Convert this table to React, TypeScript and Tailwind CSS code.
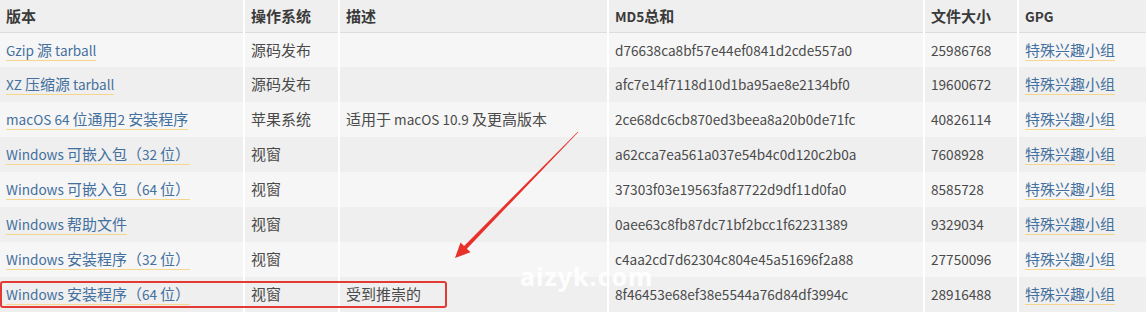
const rows = [
  { name: "Gzip 源 tarball", os: "源码发布", desc: "", md5: "d76638ca8bf57e44ef0841d2cde557a0", size: "25986768" },
  { name: "XZ 压缩源 tarball", os: "源码发布", desc: "", md5: "afc7e14f7118d10d1ba95ae8e2134bf0", size: "19600672" },
  { name: "macOS 64 位通用2 安装程序", os: "苹果系统", desc: "适用于 macOS 10.9 及更高版本", md5: "2ce68dc6cb870ed3beea8a20b0de71fc", size: "40826114" },
  { name: "Windows 可嵌入包（32 位）", os: "视窗", desc: "", md5: "a62cca7ea561a037e54b4c0d120c2b0a", size: "7608928" },
  { name: "Windows 可嵌入包（64 位）", os: "视窗", desc: "", md5: "37303f03e19563fa87722d9df11d0fa0", size: "8585728" },
  { name: "Windows 帮助文件", os: "视窗", desc: "", md5: "0aee63c8fb87dc71bf2bcc1f62231389", size: "9329034" },
  { name: "Windows 安装程序（32 位）", os: "视窗", desc: "", md5: "c4aa2cd7d62304c804e45a51696f2a88", size: "27750096" },
  { name: "Windows 安装程序（64 位）", os: "视窗", desc: "受到推崇的", md5: "8f46453e68ef38e5544a76d84df3994c", size: "28916488" },
];

// Latin glyphs of the CJK font run wide, so Latin runs get a smaller size
const T = ({ s }: { s: string }) => {
  const parts = s.match(/[\u3000-\u9fff\uff00-\uffef]+|[^\u3000-\u9fff\uff00-\uffef]+/g) || [];
  return (
    <>
      {parts.map((p, i) =>
        /[\u3000-\u9fff\uff00-\uffef]/.test(p) ? (
          <span key={i} className="text-[15px]">{p}</span>
        ) : (
          <span key={i} className="text-[13.6px]">{p}</span>
        )
      )}
    </>
  );
};

const cell = "border-r-2 border-white pl-[6px] whitespace-nowrap overflow-hidden";
const link = "text-[#43709e] border-b border-[#f4d68c]";

export default function App() {
  return (
    <div
      className="relative w-[1147px] h-[312px] overflow-hidden bg-white text-[15px] text-[#4a4a4a]"
      style={{ fontFamily: '"Noto Sans CJK SC", "Noto Sans", sans-serif' }}
    >
      <table className="table-fixed border-collapse w-[1147px]">
        <colgroup>
          <col className="w-[244px]" />
          <col className="w-[95px]" />
          <col className="w-[269px]" />
          <col className="w-[316px]" />
          <col className="w-[94px]" />
          <col className="w-[129px]" />
        </colgroup>
        <thead>
          <tr className="h-[32px] bg-[#efefef] border-b border-[#dcdcdc] text-left font-bold text-[#3a3a3a]">
            <th className={cell}><T s="版本" /></th>
            <th className={cell}><T s="操作系统" /></th>
            <th className={cell}><T s="描述" /></th>
            <th className={cell}><T s="MD5总和" /></th>
            <th className={cell}><T s="文件大小" /></th>
            <th className={cell}><T s="GPG" /></th>
          </tr>
        </thead>
        <tbody>
          {rows.map((r, i) => (
            <tr key={r.md5} className={"h-[35px] " + (i % 2 === 0 ? "bg-[#f6f6f6]" : "bg-[#efefef]")}>
              <td className={cell}>
                <a className={link}><T s={r.name} /></a>
              </td>
              <td className={cell}><T s={r.os} /></td>
              <td className={cell}><T s={r.desc} /></td>
              <td className={cell}><T s={r.md5} /></td>
              <td className={cell}><T s={r.size} /></td>
              <td className={cell}>
                <a className={link}><T s="特殊兴趣小组" /></a>
              </td>
            </tr>
          ))}
        </tbody>
      </table>

      {/* highlight box around the recommended row */}
      <div className="absolute left-0 top-[281px] w-[447px] h-[27px] border-[2.5px] border-[#e23a34] rounded-[3px]" />

      {/* arrow */}
      <svg className="absolute inset-0 pointer-events-none" width="1147" height="312">
        <polygon
          points="577.8,131.8 464.1,245.9 460.5,242.4 455,258 470.5,252.2 466.9,248.7 578.2,132.2"
          fill="#e8312b"
        />
      </svg>

      {/* watermark */}
      <div
        className="absolute left-[520px] top-[258px] text-[25px] font-bold text-white/90 tracking-[1px]"
        style={{ fontFamily: '"Noto Sans", sans-serif' }}
      >
        aizyk.com
      </div>
    </div>
  );
}
